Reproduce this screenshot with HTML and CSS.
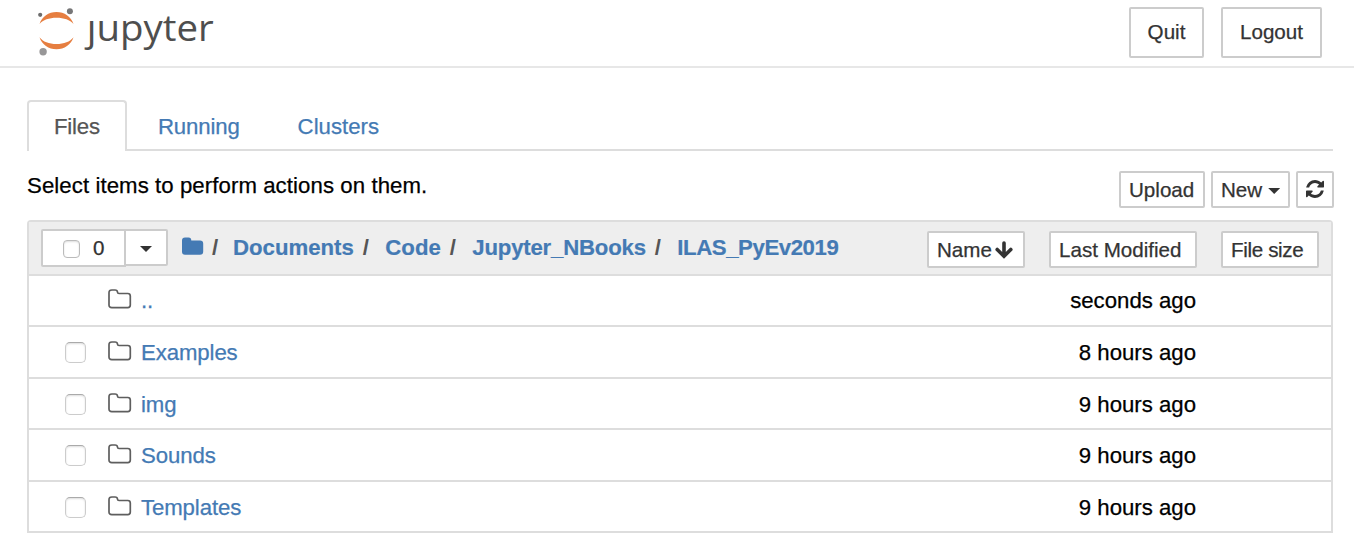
FILE: index.html
```html
<!DOCTYPE html>
<html lang="en">
<head>
<meta charset="utf-8">
<title>Jupyter</title>
<link rel="stylesheet" href="styles.css">
</head>
<body>
<svg class="defs" width="0" height="0">
  <symbol id="folder" viewBox="0 0 24 20">
    <path d="M1 3.8Q1 1 3.8 1H7Q9.4 1 9.5 3.3Q9.6 4.5 11 4.5H19.8Q22.3 4.5 22.3 7V16Q22.3 18.6 19.8 18.6H3.8Q1 18.6 1 16Z" fill="none" stroke="#5e5e5e" stroke-width="1.7"/>
  </symbol>
</svg>
<header class="header">
  <svg class="logo" width="190" height="60" viewBox="30 0 190 60">
    <path d="M39.5 24C42 16.5 48.6 12 56.5 12S71 16.500 73.500 24C70 19.800 64 17.700 56.500 17.700S43 19.800 39.500 24Z" fill="#e67e40"/>
    <path d="M39.500 37.200C43 41.700 49 44 56.500 44S70 41.700 73.500 37.200C71 44.700 64.400 49.200 56.500 49.200S42 44.700 39.500 37.200Z" fill="#e67e40"/>
    <circle cx="40.200" cy="14.800" r="2.100" fill="#6d6d6d"/>
    <circle cx="69.900" cy="11.200" r="3" fill="#767677"/>
    <circle cx="43.100" cy="51.700" r="3.700" fill="#989798"/>
    <text class="wordmark" x="86.800" y="40.500" textLength="127" lengthAdjust="spacingAndGlyphs">ȷupyter</text>
  </svg>
  <div class="session">
    <button class="btn btn-big quit">Quit</button>
    <button class="btn btn-big logout">Logout</button>
  </div>
</header>
<main class="main">
  <nav class="tabs">
    <a class="tab active">Files</a>
    <a class="tab running">Running</a>
    <a class="tab">Clusters</a>
  </nav>
  <div class="toolbar">
    <div class="hint">Select items to perform actions on them.</div>
    <div class="actions">
      <button class="btn upload">Upload</button>
      <button class="btn new">New<i class="caret"></i></button>
      <button class="btn refresh"><svg width="18" height="18" viewBox="0 0 1536 1536"><path fill="#333" d="M1511 928q0 5-1 7-64 268-268 434.500T764 1536q-146 0-282.500-55T238 1324l-129 129q-19 19-45 19t-45-19-19-45V960q0-26 19-45t45-19h448q26 0 45 19t19 45-19 45l-137 137q71 66 161 102t187 36q134 0 250-65t186-179q11-17 53-117 8-23 30-23h192q13 0 22.500 9.500t9.500 22.500zm25-800v448q0 26-19 45t-45 19h-448q-26 0-45-19t-19-45 19-45l138-138Q969 256 768 256q-134 0-250 65T332 500q-11 17-53 117-8 23-30 23H50q-13 0-22.500-9.500T18 608v-7q65-268 270-434.500T768 0q146 0 284 55.500T1297 212l130-129q19-19 45-19t45 19 19 45z"/></svg></button>
    </div>
  </div>
  <section class="list">
    <div class="list-head">
      <div class="select-group">
        <button class="btn select-all"><i class="check small"></i><span>0</span></button>
        <button class="btn select-menu"><i class="caret"></i></button>
      </div>
      <div class="crumbs">
        <svg class="home" width="22" height="19" viewBox="0 0 22 19"><path fill="#447ab4" d="M0 3.500Q0 .5 3 .5H6.500Q9.300 .5 9.300 3.400H18Q21.200 3.400 21.200 6.500V14.800Q21.200 17.800 18 17.800H3Q0 17.800 0 14.800Z"/></svg>
        <span class="sep first">/</span><a>Documents</a><span class="sep">/</span><a>Code</a><span class="sep">/</span><a class="tight">Jupyter_NBooks</a><span class="sep">/</span><a class="tighter">ILAS_PyEv2019</a>
      </div>
      <div class="sorts">
        <button class="btn name">Name<svg width="18" height="18" viewBox="0 0 18 18"><path d="M9 2V15M2.200 8.500L9 15.200L15.800 8.500" fill="none" stroke="#333" stroke-width="3.600" stroke-linecap="round"/></svg></button>
        <button class="btn modified">Last Modified</button>
        <button class="btn size">File size</button>
      </div>
    </div>
    <div class="row first-row"><i class="check blank"></i><svg class="icon"><use href="#folder"/></svg><a>..</a><time>seconds ago</time></div>
    <div class="row"><i class="check"></i><svg class="icon"><use href="#folder"/></svg><a>Examples</a><time>8 hours ago</time></div>
    <div class="row short"><i class="check"></i><svg class="icon"><use href="#folder"/></svg><a>img</a><time>9 hours ago</time></div>
    <div class="row"><i class="check"></i><svg class="icon"><use href="#folder"/></svg><a>Sounds</a><time>9 hours ago</time></div>
    <div class="row short"><i class="check"></i><svg class="icon"><use href="#folder"/></svg><a>Templates</a><time>9 hours ago</time></div>
  </section>
</main>
</body>
</html>
```
FILE: styles.css
```css
* { box-sizing: border-box; }
body {
  margin: 0;
  height: 534px;
  overflow: hidden;
  background: #fff;
  color: #000;
  font: 22.2px/26px "Liberation Sans", Arial, sans-serif;
  -webkit-text-stroke: 0.25px currentColor;
}
a { color: #447ab4; }
.defs { display: block; }
.header {
  display: flex;
  justify-content: space-between;
  height: 68px;
  padding: 0 32px 0 30px;
  border-bottom: 2px solid #e7e7e7;
}
.wordmark {
  font: 37px "Open Sans", "Noto Sans", sans-serif;
  fill: #4e4e4e;
  -webkit-text-stroke: 0.9px #4e4e4e;
}
.session { display: flex; gap: 17px; padding-top: 7px; }
.btn {
  display: flex;
  align-items: center;
  justify-content: flex-start;
  flex: none;
  height: 37px;
  margin: 0;
  padding: 1px 0 0 8px;
  border: 2px solid #ccc;
  border-radius: 2px;
  background: #fff;
  color: #333;
  font: 20.6px/24px "Liberation Sans", Arial, sans-serif;
  white-space: nowrap;
}
.btn-big { height: 51px; padding: 0 0 2px; justify-content: center; }
.quit { width: 75px; }
.logout { width: 101px; }
.main { padding: 32px 21px 0 27px; }
.tabs { display: flex; height: 51px; width: 1306px; border-bottom: 2px solid #ddd; }
.tab { height: 49px; padding: 14px 29px 0 29px; }
.running { padding-left: 31px; letter-spacing: -0.15px; }
.active {
  height: 51px;
  width: 100px;
  padding: 12px 0 0 25px;
  border: 2px solid #ddd;
  border-bottom: 0;
  border-radius: 4px 4px 0 0;
  background: #fff;
  color: #555;
  letter-spacing: -0.2px;
}
.toolbar { display: flex; justify-content: space-between; height: 69px; }
.hint { padding-top: 22px; letter-spacing: 0.08px; }
.actions { display: flex; gap: 6px; padding-top: 20px; margin-right: -1px; }
.upload { width: 86px; }
.new { width: 79px; padding-top: 0; }
.refresh { width: 38px; padding: 0 0 2px; justify-content: center; }
.caret {
  width: 12px;
  height: 6px;
  background: #333;
  clip-path: polygon(0 0, 100% 0, 50% 100%);
}
.new .caret { margin: 3px 0 0 6px; }
.list { width: 1306px; border: 2px solid #ddd; border-bottom: 0; border-radius: 4px 4px 0 0; }
.list-head {
  display: flex;
  height: 54px;
  padding-left: 12px;
  background: #eee;
  border-bottom: 2px solid #ddd;
}
.select-group { display: flex; padding-top: 7px; }
.select-all { width: 85px; height: 38px; padding: 0 0 0 20px; border-radius: 2px 0 0 2px; }
.select-all span { margin-left: 13px; }
.select-menu { width: 44px; height: 37px; margin-left: -2px; padding: 3px 0 0; justify-content: center; border-radius: 0 2px 2px 0; }
.check {
  flex: none;
  width: 21px;
  height: 21px;
  border: 1.500px solid #ccc;
  border-top-color: #aaa;
  border-radius: 5px;
  box-shadow: inset 0 1px 2px #ddd;
}
.small { width: 17px; height: 18px; border-radius: 4px; border-color: #bbb; margin-top: 2px; }
.blank { visibility: hidden; }
.crumbs { display: flex; padding: 13px 0 0 14px; font-weight: bold; -webkit-text-stroke: 0.2px currentColor; }
.home { margin-top: 2px; }
.sep { width: 31.500px; padding-left: 9px; color: #555; -webkit-text-stroke: 0; }
.first { width: 29px; padding-left: 8px; }
.tight { letter-spacing: -0.2px; }
.tighter { letter-spacing: -0.42px; }
.sorts { display: flex; gap: 24px; margin-left: auto; padding: 9px 12px 0 0; }
.name { width: 98px; }
.name svg { margin: 0 0 0 3px; }
.modified { width: 148px; }
.size { width: 98px; letter-spacing: -0.35px; }
.row {
  display: flex;
  align-items: center;
  height: 52px;
  padding: 0 135px 0 36px;
  border-bottom: 2px solid #ddd;
}
.row a, .row time { padding-top: 2px; }
.row a { letter-spacing: -0.1px; }
.short { height: 51px; padding-top: 1px; }
.first-row { height: 51px; }
.first-row a, .first-row time { padding-top: 0; }
.icon { width: 24px; height: 20px; margin: -3px 9px 0 22px; }
.row time { margin-left: auto; }
```
